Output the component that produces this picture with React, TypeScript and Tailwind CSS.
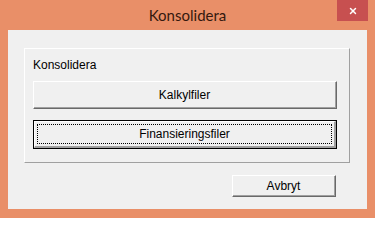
import { X } from "lucide-react";

function ClassicButton({ label, isDefault, className }: { label: string; isDefault?: boolean; className: string }) {
  if (isDefault) {
    return (
      <div className={`border border-black ${className}`}>
        <div className="h-full w-full border-t border-l border-r-2 border-b-2 border-t-white border-l-white border-r-[#a0a0a0] border-b-[#a0a0a0] bg-[#f0f0f0] p-[2px]">
          <div className="flex h-full w-full items-center justify-center border border-dotted border-black">
            {label}
          </div>
        </div>
      </div>
    );
  }
  return (
    <div className={`border-t border-l border-r border-b border-t-white border-l-white border-r-[#696969] border-b-[#696969] ${className}`}>
      <div className="flex h-full w-full items-center justify-center border-r border-b border-r-[#a0a0a0] border-b-[#a0a0a0] bg-[#f0f0f0]">
        {label}
      </div>
    </div>
  );
}

export default function App() {
  return (
    <div className="flex h-[218px] w-[375px] flex-col bg-[#e98f68] font-['Liberation_Sans',sans-serif] text-[12px] text-black">
      <div className="relative flex h-[30px] shrink-0 items-center justify-center">
        <span className="font-['Lato',sans-serif] text-[15px] text-[#34180e]">Konsolidera</span>
        <div className="absolute right-[7px] top-0 flex h-[21px] w-[31px] items-center justify-center bg-[#c75050]">
          <X className="h-[10px] w-[10px] text-white" strokeWidth={3.5} />
        </div>
      </div>
      <div className="mx-[8px] h-[179px] shrink-0 bg-[#f0f0f0] pl-[16px] pt-[18px]">
        <div className="h-[115px] w-[326px] border-t border-l border-r border-b border-t-white border-l-white border-r-[#a0a0a0] border-b-[#a0a0a0] pl-[8px] pt-[9px]">
          <div className="h-[14px] leading-[14px]">Konsolidera</div>
          <ClassicButton label="Kalkylfiler" className="mt-[9px] h-[28px] w-[304px]" />
          <ClassicButton label="Finansieringsfiler" isDefault className="mt-[11px] h-[29px] w-[304px]" />
        </div>
        <div className="flex pl-[208px] pt-[12px]">
          <ClassicButton label="Avbryt" className="h-[22px] w-[104px]" />
        </div>
      </div>
    </div>
  );
}
